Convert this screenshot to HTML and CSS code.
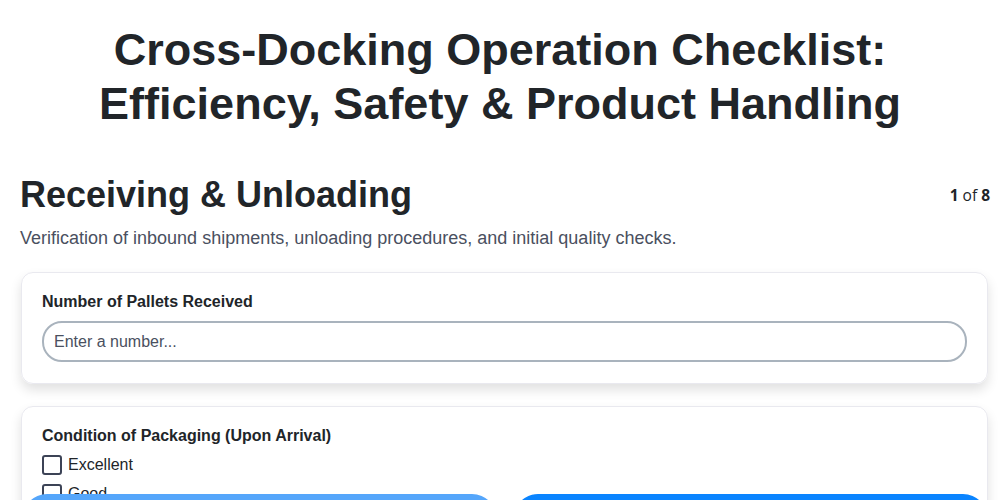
FILE: index.html
```html
<!DOCTYPE html>
<html lang="en">
    <head>
        <meta charset="UTF-8" />
        <meta name="viewport" content="width=device-width, initial-scale=1.0" />
        <title>Cross-Docking Checklist</title>
        <link rel="stylesheet" href="styles.css">
    </head>
    <body>
        <div class="container">
            <h1 class="main-title">Cross-Docking Operation Checklist: Efficiency, Safety &amp; Product Handling</h1>

            <div class="section-head">
                <h2>Receiving &amp; Unloading</h2>
                <span class="progress"><b>1</b> of <b>8</b></span>
            </div>
            <p class="section-desc">Verification of inbound shipments, unloading procedures, and initial quality checks.</p>

            <div class="card">
                <label class="q-label" for="pallets">Number of Pallets Received</label>
                <input class="q-input" type="text" id="pallets" placeholder="Enter a number..." />
            </div>

            <div class="card">
                <div class="q-label">Condition of Packaging (Upon Arrival)</div>
                <label class="check-row"><span class="box"></span>Excellent</label>
                <label class="check-row"><span class="box"></span>Good</label>
                <label class="check-row"><span class="box"></span>Fair</label>
                <label class="check-row"><span class="box"></span>Damaged</label>
            </div>
        </div>

        <div class="nav-bar">
            <button class="btn btn-prev">Previous</button>
            <button class="btn btn-next">Next</button>
        </div>
    </body>
</html>
```

FILE: styles.css
```css
body {
    margin: 0;
    font-family: "Liberation Sans", Arial, sans-serif;
    color: #212529;
    background: #fff;
}

.container {
    padding: 0 10px 0 20px;
}

.main-title {
    margin: 23px 45px 0 35px;
    text-align: center;
    font-size: 45px;
    line-height: 54px;
    font-weight: bold;
}

.section-head {
    display: flex;
    justify-content: space-between;
    align-items: center;
    margin-top: 42px;
}

h2 {
    margin: 0;
    font-size: 36px;
    line-height: 44px;
}

.progress {
    font-family: "Open Sans", sans-serif;
    font-size: 15.5px;
    color: #212529;
}

.section-desc {
    margin: 11px 0 23px;
    font-size: 18px;
    color: #4a5060;
}

.card {
    display: flex;
    flex-direction: column;
    margin: 0 2px 22px 1px;
    padding: 20px 20px 21px;
    border: 1px solid #e9e9ef;
    border-radius: 12px;
    box-shadow: 0 6px 12px rgba(0, 0, 0, 0.12);
}

.q-label {
    font-size: 16px;
    font-weight: bold;
    margin-bottom: 10px;
}

.q-input {
    height: 41px;
    box-sizing: border-box;
    padding: 0 10px;
    border: 2px solid #a9b3bd;
    border-radius: 20px;
    font-family: "Liberation Sans", Arial, sans-serif;
    font-size: 16px;
    color: #4a5060;
}

.q-input::placeholder {
    color: #4a5060;
}

.check-row {
    display: flex;
    align-items: center;
    gap: 6px;
    font-size: 16px;
    height: 19px;
    margin-bottom: 10px;
}

.box {
    width: 16px;
    height: 16px;
    border: 2px solid #3c4356;
    border-radius: 3px;
}

.nav-bar {
    position: fixed;
    left: 22px;
    right: 12px;
    bottom: -44px;
    display: flex;
    gap: 16px;
}

.btn {
    flex: 1;
    height: 50px;
    border: none;
    border-radius: 25px;
    color: #fff;
    font-size: 18px;
    font-weight: bold;
}

.btn-prev {
    background: #55a6fb;
}

.btn-next {
    background: #0a84ff;
}
```
